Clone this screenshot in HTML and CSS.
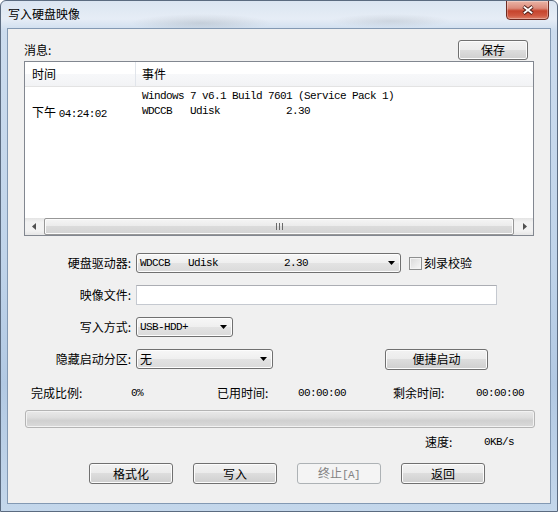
FILE: index.html
```html
<!DOCTYPE html>
<html lang="zh-CN">
<head>
  <meta charset="UTF-8">
  <title>写入硬盘映像</title>
  <link rel="stylesheet" href="styles.css">
</head>
<body>
  <div class="window">
    <div class="titlebar">
      <span class="title">写入硬盘映像</span>
      <div class="close-btn">
        <svg width="12" height="10" viewBox="0 0 12 10">
          <path d="M1.5 1.5 L10.5 8.5 M10.5 1.5 L1.5 8.5" stroke="#4a1a14" stroke-width="3.6"/>
          <path d="M1.8 1.8 L10.2 8.2 M10.2 1.8 L1.8 8.2" stroke="#fff" stroke-width="1.8"/>
        </svg>
      </div>
    </div>

    <div class="client">
      <div class="msg-head">
        <span>消息:</span>
        <button class="btn btn-save">保存</button>
      </div>

      <div class="listbox">
        <div class="lv-head">
          <div class="col-time">时间</div>
          <div class="col-event">事件</div>
        </div>
        <div class="lv-body">
          <div class="lv-row">
            <span class="col-time"></span>
            <span class="col-event mono">Windows 7 v6.1 Build 7601 (Service Pack 1)</span>
          </div>
          <div class="lv-row">
            <span class="col-time">下午 <span class="mono">04:24:02</span></span>
            <span class="col-event mono">WDCCB   Udisk           2.30</span>
          </div>
        </div>
        <div class="hscroll">
          <div class="sb-arrow">
            <svg width="4" height="7" viewBox="0 0 4 7"><polygon points="4,0 4,7 0,3.5" fill="#505050"/></svg>
          </div>
          <div class="sb-thumb">
            <svg width="7" height="7" viewBox="0 0 7 7">
              <path d="M0.5 0 V7 M3.5 0 V7 M6.5 0 V7" stroke="#6a6a6a" stroke-width="1"/>
            </svg>
          </div>
          <div class="sb-arrow">
            <svg width="4" height="7" viewBox="0 0 4 7"><polygon points="0,0 0,7 4,3.5" fill="#505050"/></svg>
          </div>
        </div>
      </div>

      <div class="form">
        <span class="f-label">硬盘驱动器:</span>
        <div class="f-ctrl">
          <div class="combo combo-drive">
            <span class="mono">WDCCB   Udisk           2.30</span>
            <svg width="7" height="4" viewBox="0 0 7 4"><polygon points="0,0 7,0 3.5,4" fill="#000"/></svg>
          </div>
          <span class="check"><span class="check-box"></span>刻录校验</span>
        </div>

        <span class="f-label">映像文件:</span>
        <div class="f-ctrl">
          <div class="textbox"></div>
        </div>

        <span class="f-label">写入方式:</span>
        <div class="f-ctrl">
          <div class="combo combo-mode">
            <span class="mono">USB-HDD+</span>
            <svg width="7" height="4" viewBox="0 0 7 4"><polygon points="0,0 7,0 3.5,4" fill="#000"/></svg>
          </div>
        </div>

        <span class="f-label">隐藏启动分区:</span>
        <div class="f-ctrl">
          <div class="combo combo-hide">
            <span>无</span>
            <svg width="7" height="4" viewBox="0 0 7 4"><polygon points="0,0 7,0 3.5,4" fill="#000"/></svg>
          </div>
          <button class="btn btn-quick">便捷启动</button>
        </div>
      </div>

      <div class="stats">
        <span class="s1">完成比例:</span>
        <span class="s2 mono">0%</span>
        <span class="s3">已用时间:</span>
        <span class="s4 mono">00:00:00</span>
        <span class="s5">剩余时间:</span>
        <span class="mono">00:00:00</span>
      </div>

      <div class="progress"></div>

      <div class="speed">
        <span class="speed-label">速度:</span>
        <span class="mono">0KB/s</span>
      </div>

      <div class="actions">
        <button class="btn">格式化</button>
        <button class="btn">写入</button>
        <button class="btn" disabled>终止<span class="mono">[A]</span></button>
        <button class="btn">返回</button>
      </div>
    </div>
  </div>
</body>
</html>
```

FILE: styles.css
```css
body {
  margin: 0;
  font-family: "Noto Sans CJK SC", sans-serif;
  font-size: 12px;
  line-height: 14px;
  color: #000;
  background: #fff;
}

.mono {
  font-family: "Liberation Mono", "Noto Sans CJK SC", monospace;
  font-size: 11px;
  letter-spacing: -0.6px;
  white-space: pre;
}

/* window frame */
.window {
  width: 558px;
  height: 512px;
  box-sizing: border-box;
  border: 1px solid #5b6b80;
  border-radius: 6px 6px 0 0;
  overflow: hidden;
  display: flex;
  flex-direction: column;
  background:
    radial-gradient(ellipse 70px 9px at 200px 22px, rgba(110, 120, 130, 0.22), transparent),
    radial-gradient(ellipse 60px 7px at 390px 20px, rgba(110, 120, 130, 0.18), transparent),
    linear-gradient(#dbe5f1, #e6edf6 18px, #ccdcee 30px, #c0d4ea 50%, #b2c9e3 75%, #c4d7eb 100%);
}

.titlebar {
  height: 27px;
  padding: 0 7px;
  display: flex;
  justify-content: space-between;
  align-items: flex-start;
}

.title {
  margin-top: 5px;
  line-height: 16px;
}

.close-btn {
  width: 43px;
  height: 20px;
  box-sizing: border-box;
  margin-top: -1px;
  margin-right: 1px;
  border: 1px solid #6e2b22;
  border-radius: 0 0 4px 4px;
  background: linear-gradient(#eab4a6, #dc8b7b 40%, #c6442d 55%, #cf5740 80%, #dd7f68);
  box-shadow: inset 0 0 0 1px rgba(255, 255, 255, 0.3);
  display: flex;
  align-items: center;
  justify-content: center;
}

.client {
  height: 476px;
  box-sizing: border-box;
  margin: 0 6px;
  padding: 0 16px;
  background: #f0f0f0;
  border: 1px solid #8399b3;
}

/* buttons */
.btn {
  font-family: inherit;
  font-size: 12px;
  color: #000;
  width: 84px;
  height: 21px;
  box-sizing: border-box;
  padding: 0;
  line-height: 18px;
  border: 1px solid #707070;
  border-radius: 3px;
  background: linear-gradient(#f2f2f2, #ebebeb 50%, #dddddd 50%, #cfcfcf);
  box-shadow: inset 0 0 0 1px #fcfcfc;
}

.btn:disabled {
  color: #838383;
  border-color: #adb2b5;
  background: #f4f4f4;
  box-shadow: none;
}

/* message list */
.msg-head {
  height: 20px;
  margin-top: 11px;
  display: flex;
  justify-content: space-between;
  align-items: center;
}

.btn-save {
  width: 70px;
  height: 20px;
  margin-right: 6px;
}

.listbox {
  height: 175px;
  box-sizing: border-box;
  margin-top: 1px;
  border: 1px solid #828790;
  background: #fff;
  display: flex;
  flex-direction: column;
}

.lv-head {
  height: 25px;
  box-sizing: border-box;
  display: flex;
  line-height: 24px;
  border-bottom: 1px solid #e3e3e3;
  background: linear-gradient(#fff, #fff 50%, #f7f8fa 50%, #f2f3f5);
}

.col-time {
  width: 111px;
  box-sizing: border-box;
  padding-left: 7px;
}

.lv-head .col-time {
  border-right: 1px solid #e1e5eb;
}

.col-event {
  padding-left: 6px;
}

.lv-body {
  flex: 1;
  padding-top: 2px;
}

.lv-row {
  height: 15px;
  line-height: 15px;
  display: flex;
}

.hscroll {
  height: 17px;
  display: flex;
  background: linear-gradient(#e4e4e4, #f2f2f2 25%, #f2f2f2 75%, #e6e6e6);
}

.sb-arrow {
  width: 17px;
  display: flex;
  align-items: center;
  justify-content: center;
}

.sb-thumb {
  flex: 1;
  margin: 0 2px;
  box-sizing: border-box;
  border: 1px solid #979797;
  border-radius: 2px;
  background: linear-gradient(#f5f5f5, #ebebeb 50%, #dbdbdb 50%, #d3d3d3);
  box-shadow: inset 0 0 0 1px #fbfbfb;
  display: flex;
  align-items: center;
  justify-content: center;
}

/* form rows */
.form {
  margin-top: 17px;
  display: grid;
  grid-template-columns: 107px auto;
  grid-auto-rows: 20px;
  column-gap: 5px;
  row-gap: 12px;
  align-items: center;
}

.f-label {
  text-align: right;
}

.f-ctrl {
  display: flex;
  align-items: center;
}

.combo {
  height: 20px;
  box-sizing: border-box;
  padding: 0 5px 0 3px;
  border: 1px solid #707070;
  border-radius: 3px;
  background: linear-gradient(#f7f7f7, #efefef 50%, #e3e3e3 50%, #dadada);
  box-shadow: inset 0 0 0 1px #fdfdfd;
  display: flex;
  align-items: center;
  justify-content: space-between;
}

.combo-drive { width: 265px; }
.combo-mode { width: 97px; }
.combo-hide { width: 137px; }

.check {
  margin-left: 8px;
  display: flex;
  align-items: center;
  gap: 2px;
}

.check-box {
  width: 13px;
  height: 13px;
  box-sizing: border-box;
  border: 1px solid #8e8f8f;
  background: linear-gradient(135deg, #d8d8d8, #f8f8f8);
  box-shadow: inset 0 0 0 1px #f4f4f4;
}

.textbox {
  width: 361px;
  height: 20px;
  box-sizing: border-box;
  background: #fff;
  border: 1px solid #c5c9d0;
  border-top-color: #abadb3;
}

.btn-quick {
  width: 103px;
  margin-left: 112px;
}

/* progress */
.stats {
  margin-top: 17px;
  padding-left: 7px;
  display: flex;
}

.s1 { width: 100px; }
.s2 { width: 86px; }
.s3 { width: 81px; }
.s4 { width: 95px; }
.s5 { width: 83px; }

.progress {
  height: 18px;
  box-sizing: border-box;
  margin: 10px -1px 0 1px;
  border: 1px solid #b4b4b4;
  border-radius: 3px;
  background: linear-gradient(#e9e9e9, #dedede 40%, #d0d0d0 60%, #dadada);
  box-shadow: inset 0 0 0 1px #f2f2f2;
}

.speed {
  margin-top: 7px;
  padding-left: 401px;
  display: flex;
}

.speed-label {
  width: 59px;
}

.actions {
  margin-top: 14px;
  padding-left: 65px;
  display: flex;
  gap: 20px;
}
```
